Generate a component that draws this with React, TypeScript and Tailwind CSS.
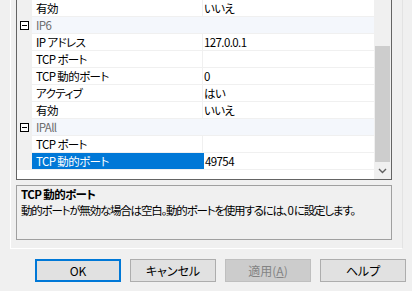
import React from "react";

type Row =
    | { kind: "prop"; name: string; value: string; selected?: boolean }
    | { kind: "cat"; name: string };

const rows: Row[] = [
    { kind: "prop", name: "有効", value: "いいえ" },
    { kind: "cat", name: "IP6" },
    { kind: "prop", name: "IP アドレス", value: "127.0.0.1" },
    { kind: "prop", name: "TCP ポート", value: "" },
    { kind: "prop", name: "TCP 動的ポート", value: "0" },
    { kind: "prop", name: "アクティブ", value: "はい" },
    { kind: "prop", name: "有効", value: "いいえ" },
    { kind: "cat", name: "IPAll" },
    { kind: "prop", name: "TCP ポート", value: "" },
    { kind: "prop", name: "TCP 動的ポート", value: "49754", selected: true },
];

function MinusBox() {
    return (
        <div className="w-[9px] h-[9px] border border-black bg-white flex items-center justify-center">
            <div className="w-[5px] h-[1px] bg-black"></div>
        </div>
    );
}

function GridRow({ row }: { row: Row }) {
    if (row.kind === "cat") {
        return (
            <div className="flex h-[17px] border-b border-[#f0f0f0]">
                <div className="w-[15px] bg-[#f0f0f0] flex items-center pl-[3px]">
                    <MinusBox />
                </div>
                <div className="flex-1 bg-[#f4f7fc] pl-[4px] flex items-center text-[#6d6d6d]">{row.name}</div>
            </div>
        );
    }
    return (
        <div className="flex h-[17px] border-b border-[#f0f0f0]">
            <div className="w-[15px] bg-[#f0f0f0]"></div>
            <div
                className={
                    row.selected
                        ? "w-[172px] bg-[#0078d7] text-white pl-[4px] flex items-center"
                        : "w-[171px] bg-white pl-[4px] flex items-center border-r border-[#f0f0f0]"
                }
            >
                {row.name}
            </div>
            <div className="flex-1 bg-white pl-[1px] flex items-center">{row.value}</div>
        </div>
    );
}

function Btn({ label, primary, disabled }: { label: React.ReactNode; primary?: boolean; disabled?: boolean }) {
    let cls = "w-[86px] h-[23px] flex items-center justify-center ";
    if (primary) cls += "border-2 border-[#0078d7] bg-[#e1e1e1] text-black";
    else if (disabled) cls += "border border-[#bfbfbf] bg-[#cccccc] text-[#838383]";
    else cls += "border border-[#adadad] bg-[#e1e1e1] text-black";
    return <div className={cls}>{label}</div>;
}

export default function App() {
    return (
        <div className="w-[412px] h-[291px] bg-[#f0f0f0] overflow-hidden text-[11.5px] tracking-[-0.6px] leading-[16px] text-black font-['Noto_Sans_CJK_JP','Noto_Sans',sans-serif] [font-feature-settings:'palt']">
            <div className="ml-[10px] w-[393px] h-[249px] border-l border-b border-r border-l-white border-b-white border-r-[#e3e3e3] pl-[5px]">
                {/* property grid */}
                <div className="w-[376px] h-[180px] border-x border-b border-[#646464] flex">
                    <div className="flex-1 bg-white flex flex-col">
                        {rows.map((row, index) => (
                            <GridRow key={index} row={row} />
                        ))}
                    </div>
                    <div className="w-[17px] bg-[#f0f0f0] flex flex-col">
                        <div className="h-[46px]"></div>
                        <div className="h-[116px] mx-[1px] bg-[#cdcdcd]"></div>
                        <div className="h-[17px] flex items-center justify-center">
                            <svg width="9" height="6" viewBox="0 0 9 6">
                                <path d="M1 1 L4.5 4.5 L8 1" fill="none" stroke="#606060" strokeWidth="1.4" />
                            </svg>
                        </div>
                    </div>
                </div>
                {/* description */}
                <div className="mt-[5px] w-[376px] h-[55px] border border-[#a0a0a0] px-[4px] whitespace-nowrap">
                    <div className="font-bold h-[16px] flex items-center">TCP 動的ポート</div>
                    <div className="h-[16px] flex items-center tracking-[-1.2px]">動的ポートが無効な場合は空白。動的ポートを使用するには、0 に設定します。</div>
                </div>
            </div>
            <div className="mt-[10px] pl-[35px] flex gap-[9px] text-[12px] tracking-normal">
                <Btn label="OK" primary />
                <Btn label="キャンセル" />
                <Btn label={<span>適用(<span className="underline">A</span>)</span>} disabled />
                <Btn label="ヘルプ" />
            </div>
        </div>
    );
}
